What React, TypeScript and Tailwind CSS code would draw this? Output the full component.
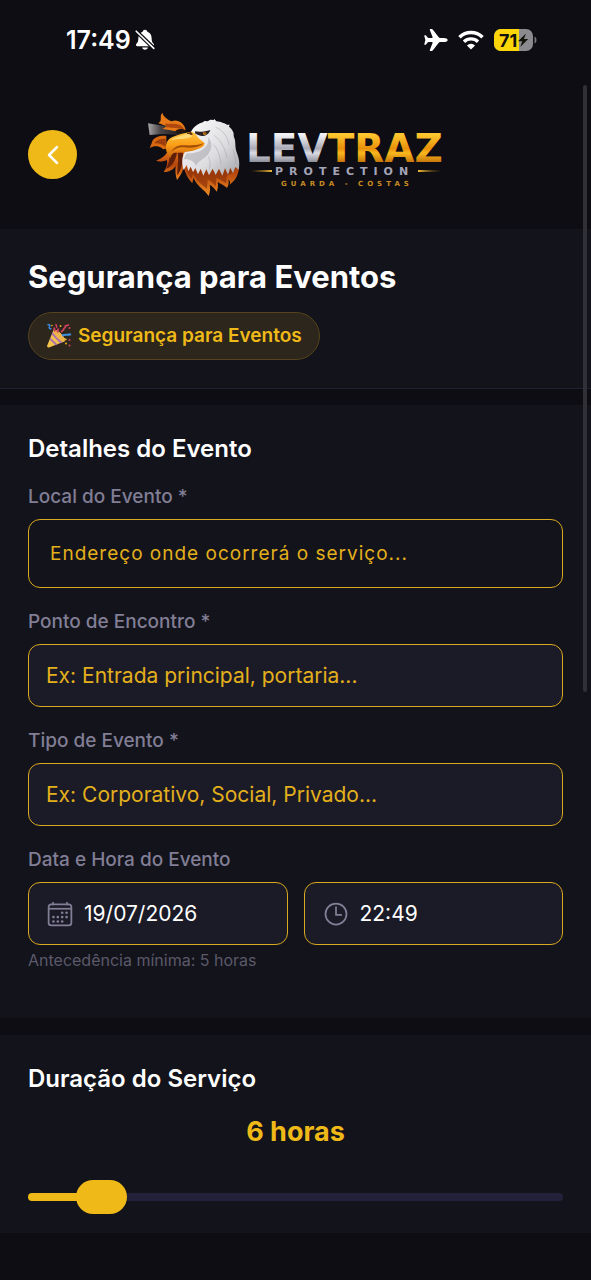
import { useState } from "react";
import { IoCalendarOutline, IoChevronBack, IoTimeOutline } from "react-icons/io5";

const inputClass =
  "h-[63px] w-full rounded-xl border border-[#d9a91f] bg-[#1b1a27] px-[17px] text-[21px] text-white placeholder-[#e3b01c] focus:outline-none";

function BellOff() {
  return (
    <svg className="h-[22px] w-[20px]" viewBox="0 0 20 22" fill="#fff">
      <path d="M10 .8c1.200 0 2.200.8 2.400 1.900 2.700.9 4.100 3.200 4.200 6.100.1 3.400.5 4.500 2 6 .9.900.4 2.500-.9 2.500H2.300c-1.300 0-1.800-1.600-.9-2.500 1.500-1.500 1.900-2.600 2-6 .1-2.900 1.500-5.200 4.200-6.100C7.800 1.600 8.800.8 10 .8Z" />
      <path d="M7.200 18.600h5.600c-.2 1.300-1.300 2.200-2.800 2.200s-2.600-.9-2.800-2.200Z" />
      <path d="M.6 1.600 19.600 20" stroke="#0e0d13" strokeWidth="4" />
      <path d="M1.200 2.200 18.800 19.400" stroke="#fff" strokeWidth="1.600" strokeLinecap="round" />
    </svg>
  );
}

function Airplane() {
  return (
    <svg className="h-[22px] w-[24px]" viewBox="0 0 68 64" fill="#fff">
      <path d="M68 32c0 4-5 6-11 6H46c-2 0-3 1-4 2L25 62c-1 1-2 2-4 2h-3c-2 0-2-1-2-3l8-20c0-2 0-3-3-3h-8c-2 0-3 1-4 2l-4 5c-1 1-2 1-3 1H1c-1 0-1-1-1-2l3-12L0 20c0-1 0-2 1-2h1c1 0 2 0 3 1l4 5c1 1 2 2 4 2h8c3 0 3-1 3-3L16 3c0-2 0-3 2-3h3c2 0 3 1 4 2l17 22c1 1 2 2 4 2h11c6 0 11 2 11 6Z" />
    </svg>
  );
}

function Wifi() {
  return (
    <svg className="h-[20px] w-[26px]" viewBox="0 0 26 20" fill="none" stroke="#fff">
      <path d="M1.500 7.200a16.500 16.500 0 0 1 23 0" strokeWidth="3.600" />
      <path d="M6 11.700a10.200 10.200 0 0 1 14 0" strokeWidth="3.400" />
      <path d="M13 19.500 8.900 15.400a5.900 5.900 0 0 1 8.200 0Z" fill="#fff" stroke="none" />
    </svg>
  );
}

function Battery() {
  return (
    <svg className="h-[22px] w-[43px]" viewBox="0 0 43 22">
      <defs>
        <clipPath id="cell">
          <rect x="0" y="0" width="39" height="22" rx="7" />
        </clipPath>
      </defs>
      <g clipPath="url(#cell)">
        <rect width="39" height="22" fill="#8b8b8f" />
        <rect width="25" height="22" fill="#fdd60a" />
      </g>
      <path d="M40.500 7.500c2.600.8 2.600 6.200 0 7Z" fill="#77777b" />
      <text x="5" y="17.500" fontSize="18" fontWeight="700" fill="#14130a" fontFamily="Inter, sans-serif">
        71
      </text>
      <path d="M32 4.500 24 12.300h4.300L26.200 18l8-7.900h-4.300Z" fill="#14130a" />
    </svg>
  );
}

function Eagle() {
  return (
    <svg className="h-[87px] w-[95px]" viewBox="22 35 285 261">
      <defs>
        <linearGradient id="flame" x1="0" y1="0" x2="0" y2="1">
          <stop offset="0" stopColor="#e8791a" />
          <stop offset=".5" stopColor="#b5460d" />
          <stop offset="1" stopColor="#ef8a22" />
        </linearGradient>
        <linearGradient id="beak" x1="0" y1="0" x2="0" y2="1">
          <stop offset="0" stopColor="#ffc63f" />
          <stop offset=".5" stopColor="#fb9d17" />
          <stop offset="1" stopColor="#c7620a" />
        </linearGradient>
        <linearGradient id="head" x1="0" y1="0" x2="1" y2="1">
          <stop offset="0" stopColor="#ffffff" />
          <stop offset=".6" stopColor="#dddde0" />
          <stop offset="1" stopColor="#a2a3a8" />
        </linearGradient>
        <linearGradient id="barrel" x1="0" y1="0" x2="1" y2="0">
          <stop offset="0" stopColor="#a9a6a6" />
          <stop offset=".35" stopColor="#4b4648" />
          <stop offset="1" stopColor="#171317" />
        </linearGradient>
      </defs>

      {/* neck feathers */}
      <path
        d="M126 150 134 210 C140 232 150 242 158 252 C160 244 160 240 162 236 C172 262 194 270 207 290 C212 276 212 266 210 256 C220 262 226 268 231 277 C235 268 236 258 234 248 C244 254 254 258 262 266 C268 258 268 248 266 240 C272 246 272 250 270 256 C286 244 298 228 298 200 L240 170Z"
        fill="url(#flame)"
      />
      <path
        d="M140 205C144 225 150 232 156 238L160 222C170 246 190 258 202 268L204 240C214 246 222 254 228 262L230 236C240 240 252 246 259 252L262 228C274 226 286 216 292 206L220 180Z"
        fill="#8c320a"
        opacity=".7"
      />

      {/* left wing flames */}
      <path
        d="M88 150C80 166 68 178 49 184 C60 188 70 187 82 182 C84 196 80 208 72 218 C86 218 100 212 108 200 C106 216 108 230 112 242 C120 232 128 220 132 206L130 150Z"
        fill="url(#flame)"
      />
      <path d="M92 160C90 176 88 190 80 208 98 200 108 184 112 160ZM114 160C118 186 112 206 113 228 122 214 130 200 130 160Z" fill="#5e1f09" />
      <path d="M80 110C62 108 42 114 38 126 36 132 34 138 30 146 44 138 56 140 66 146 72 152 76 150 80 146Z" fill="#d8680f" />
      <path d="M78 118C64 118 50 122 44 132 56 130 68 134 78 142Z" fill="#9c3d0b" />

      {/* gun barrel and crest */}
      <path d="M25 72 62 78 130 86 124 108 70 104 30 107Z" fill="url(#barrel)" />
      <path
        d="M62 66C66 56 60 50 68 40 72 54 84 60 96 66 112 58 134 70 138 92 L110 96C96 92 82 92 68 88 74 86 78 84 80 80 70 78 64 74 56 72Z"
        fill="#e67a18"
      />
      <path d="M76 72C90 76 104 70 118 76 128 80 132 86 134 92 112 84 96 88 80 84Z" fill="#b0480e" />
      <path d="M108 94C116 86 134 88 140 94L134 102H112Z" fill="#241513" />

      {/* head */}
      <path
        d="M154 98C160 84 176 72 190 69L194 65 204 66 212 61 222 62 224 59 230 66C246 68 254 72 262 76L270 76 268 82C278 90 284 100 282 110L286 122C288 136 286 148 292 162 300 182 300 198 297 211L287 203 280 222 272 205 265 226 256 207 248 229 238 208 228 227 219 208 208 228 200 210 191 229 183 208 175 225 167 206 160 219 153 202 146 216 141 197 132 212C126 194 126 172 136 158L190 138Z"
        fill="url(#head)"
      />
      <path
        d="M140 162C164 162 184 158 198 142 206 134 208 122 204 114 220 128 218 150 204 166 190 182 174 184 170 200 164 186 150 178 132 180Z"
        fill="#9899a0"
        opacity=".45"
      />
      <path
        d="M228 84C250 92 264 112 268 136M224 108C244 124 256 146 262 176M222 136C236 152 242 172 244 196M280 150C286 166 288 180 288 194M206 172C212 184 212 194 210 208"
        stroke="#96979e"
        strokeWidth="3"
        fill="none"
        opacity=".4"
      />

      {/* beak */}
      <path
        d="M84 164C74 146 78 122 98 113 114 106 132 102 150 98 158 96 166 100 170 108 176 118 186 124 194 130 196 138 190 142 182 146 166 154 148 158 130 157 112 154 98 158 92 176 88 172 86 168 84 164Z"
        fill="url(#beak)"
      />
      <path d="M92 124C104 112 126 108 148 103 158 102 160 110 152 114 136 122 116 116 92 124Z" fill="#ffe28a" opacity=".8" />
      <path d="M194 131C170 140 148 138 130 138 112 138 100 146 94 160 104 148 116 144 130 144 154 148 178 144 194 131Z" fill="#a14c07" />
      <path d="M142 100 154 98 160 105 154 108C151 104 147 103 142 104Z" fill="#6b350a" />

      {/* eye */}
      <path d="M166 96C180 99 196 97 212 92 208 104 198 110 186 110 178 109 172 106 166 102Z" fill="#2a2122" />
      <circle cx="195" cy="102" r="5" fill="#e18a16" />
      <circle cx="196" cy="101" r="2" fill="#0d0a0a" />
    </svg>
  );
}

function Wordmark() {
  return (
    <svg className="h-[87px] w-[198px]" viewBox="0 0 198 87" fontFamily="'DejaVu Sans', sans-serif" fontWeight="700">
      <defs>
        <linearGradient id="silver" x1="0" y1="0" x2="0" y2="1">
          <stop offset=".2" stopColor="#f2f2f5" />
          <stop offset=".5" stopColor="#a9aab6" />
          <stop offset=".6" stopColor="#dcdce4" />
          <stop offset=".85" stopColor="#787b88" />
        </linearGradient>
        <linearGradient id="gold" x1="0" y1="0" x2="0" y2="1">
          <stop offset=".2" stopColor="#ffc62e" />
          <stop offset=".5" stopColor="#e8900a" />
          <stop offset=".6" stopColor="#fbb81e" />
          <stop offset=".85" stopColor="#b86606" />
        </linearGradient>
        <linearGradient id="lineL" x1="0" x2="1">
          <stop offset="0" stopColor="#6d4a10" />
          <stop offset="1" stopColor="#f6bd35" />
        </linearGradient>
        <linearGradient id="lineR" x1="0" x2="1">
          <stop offset="0" stopColor="#f6bd35" />
          <stop offset="1" stopColor="#6d4a10" />
        </linearGradient>
      </defs>
      <text x="0" y="51" fontSize="39">
        <tspan fill="url(#silver)">LEV</tspan>
        <tspan fill="url(#gold)">TRAZ</tspan>
      </text>
      <path d="M4 60 26 59v2Z" fill="url(#lineL)" />
      <path d="M172 59 196 60 172 61Z" fill="url(#lineR)" />
      <text x="29" y="64" fontSize="11" fill="#a4a5b8" className="tracking-[6px]">
        PROTECTION
      </text>
      <text x="35" y="75" fontSize="7" fill="#c98c22" className="tracking-[4px]">
        GUARDA - COSTAS
      </text>
    </svg>
  );
}

function PartyPopper() {
  return (
    <svg className="h-[26px] w-[26px]" viewBox="0 0 26 26" fill="none">
      <path d="M7.500 7 1.200 22.600c-.5 1.300.5 2.300 1.800 1.800L19 18.200C17.500 12.500 13 8 7.500 7Z" fill="#f4c34b" />
      <path d="m5.600 11.600 8.600 8.600 2.400-1L6.500 9.300Zm-2 5 6 5.600 2-.8L4.400 14.800Z" fill="#a970b4" />
      <ellipse cx="13" cy="12.500" rx="2.800" ry="7.500" transform="rotate(-45 13 12.500)" fill="#f0b54a" />
      <path d="M9 8.500 8 4.600M11.500 9.500l.8-4" stroke="#c8405f" strokeWidth="2" />
      <path d="M1.500 2c2-1 3 .5 2 1.800s.5 2.600 2 1.600" stroke="#3a86d8" strokeWidth="1.600" />
      <path d="M9.500 1.200c1.700 1 .2 2.500 1.700 3.400" stroke="#d2445f" strokeWidth="1.600" />
      <path d="m15 9 2.600-2.200c-.9-1.700 2.400-1.600 1.700-3.200-.5-1.600 3.200-.3 3.400-2.200" stroke="#d2445f" strokeWidth="1.700" />
      <path d="M16 12.500c3-1.500 5-.2 9-1.300" stroke="#3f8fe0" strokeWidth="2" />
      <path d="m17.500 15.500 3 1.200" stroke="#f0b93a" strokeWidth="1.600" />
      <circle cx="23.500" cy="5" r="1" fill="#d2445f" />
      <circle cx="14.500" cy="3" r=".9" fill="#efb918" />
      <circle cx="6" cy="2.500" r=".8" fill="#efb918" />
      <circle cx="23.500" cy="17" r="1" fill="#d2445f" />
      <circle cx="20" cy="20.500" r="1" fill="#efb918" />
      <circle cx="23.500" cy="22.500" r="1" fill="#d2445f" />
    </svg>
  );
}

function StatusBar() {
  return (
    <div className="flex h-20 items-center justify-between pl-[66px] pr-[54px]">
      <div className="flex items-center gap-1">
        <span className="text-[25px] font-semibold leading-8 text-white">17:49</span>
        <BellOff />
      </div>
      <div className="flex items-center gap-2.5">
        <Airplane />
        <Wifi />
        <Battery />
      </div>
    </div>
  );
}

function Label({ htmlFor, text }: { htmlFor: string; text: string }) {
  return (
    <label htmlFor={htmlFor} className="mb-2.5 block text-[19px] font-medium leading-6 text-[#817e95]">
      {text}
    </label>
  );
}

export default function App() {
  const [hours, setHours] = useState(6);
  const min = 4;
  const max = 24;
  const percent = ((hours - min) / (max - min)) * 100;

  return (
    <div className="relative min-h-screen bg-[#0e0d13] font-['Inter',sans-serif]">
      <StatusBar />

      <header className="grid grid-cols-[49px_1fr_49px] items-center px-7 pt-[31px] pb-[31px]">
        <button
          type="button"
          aria-label="Voltar"
          className="flex h-[49px] w-[49px] items-center justify-center rounded-full bg-[#efb918] text-white"
        >
          <IoChevronBack className="h-7 w-7" />
        </button>
        <div className="flex justify-center gap-1">
          <Eagle />
          <Wordmark />
        </div>
      </header>

      <section className="border-b border-[#20202f] bg-[#13131b] px-7 pt-7 pb-7">
        <h1 className="text-[31px] font-bold leading-10 text-white">Segurança para Eventos</h1>
        <div className="mt-[15px] inline-flex h-12 items-center gap-1.5 rounded-full border border-[#55431b] bg-[#2d261c] px-[17px] align-top">
          <PartyPopper />
          <span className="text-[19px] font-semibold text-[#efb918]">Segurança para Eventos</span>
        </div>
      </section>

      <section className="mt-4 bg-[#13131b] px-7 pt-7 pb-12">
        <h2 className="mb-5 text-[24px] font-semibold leading-8 text-white">Detalhes do Evento</h2>
        <div className="flex flex-col gap-[22px]">
          <div>
            <Label htmlFor="local" text="Local do Evento *" />
            <input
              id="local"
              type="text"
              placeholder="Endereço onde ocorrerá o serviço..."
              className="block h-[69px] w-full rounded-xl border border-[#d9a91f] bg-transparent px-[21px] text-[19px] tracking-[1px] text-white placeholder-[#e3b01c] focus:outline-none"
            />
          </div>
          <div>
            <Label htmlFor="ponto" text="Ponto de Encontro *" />
            <input id="ponto" type="text" placeholder="Ex: Entrada principal, portaria..." className={inputClass} />
          </div>
          <div>
            <Label htmlFor="tipo" text="Tipo de Evento *" />
            <input id="tipo" type="text" placeholder="Ex: Corporativo, Social, Privado..." className={inputClass} />
          </div>
          <div>
            <Label htmlFor="data" text="Data e Hora do Evento" />
            <div className="grid grid-cols-2 gap-4">
              <div className="flex h-[63px] items-center gap-2.5 rounded-xl border border-[#d9a91f] bg-[#1b1a27] px-[17px]">
                <IoCalendarOutline className="h-7 w-7 shrink-0 text-[#817e95]" />
                <input
                  id="data"
                  type="text"
                  defaultValue="19/07/2026"
                  className="w-full min-w-0 bg-transparent text-[21px] text-white focus:outline-none"
                />
              </div>
              <div className="flex h-[63px] items-center gap-2.5 rounded-xl border border-[#d9a91f] bg-[#1b1a27] px-[17px]">
                <IoTimeOutline className="h-7 w-7 shrink-0 text-[#817e95]" />
                <input
                  type="text"
                  aria-label="Hora do Evento"
                  defaultValue="22:49"
                  className="w-full min-w-0 bg-transparent text-[21px] text-white focus:outline-none"
                />
              </div>
            </div>
            <p className="mt-[5px] text-[16px] leading-5 text-[#5b596a]">Antecedência mínima: 5 horas</p>
          </div>
        </div>
      </section>

      <section className="mt-[17px] bg-[#13131b] px-7 pt-7 pb-5">
        <h2 className="text-[24px] font-semibold leading-8 text-white">
          <label htmlFor="duracao">Duração do Serviço</label>
        </h2>
        <p className="mt-[21px] text-center text-[27px] font-bold leading-8 text-[#efb918]">{hours} horas</p>
        <input
          id="duracao"
          type="range"
          min={min}
          max={max}
          value={hours}
          onChange={(e) => setHours(Number(e.target.value))}
          className="mt-8 block h-[33px] w-full appearance-none bg-transparent [&::-webkit-slider-runnable-track]:h-2 [&::-webkit-slider-runnable-track]:rounded-full [&::-webkit-slider-runnable-track]:bg-[linear-gradient(to_right,#efb918_var(--fill),#232139_var(--fill))] [&::-webkit-slider-thumb]:-mt-[13px] [&::-webkit-slider-thumb]:h-[34px] [&::-webkit-slider-thumb]:w-[51px] [&::-webkit-slider-thumb]:appearance-none [&::-webkit-slider-thumb]:rounded-full [&::-webkit-slider-thumb]:bg-[#efb918]"
          style={{ "--fill": `${percent}%` } as React.CSSProperties}
        />
      </section>

      <div className="absolute top-[85px] right-1 h-[607px] w-1 rounded-full bg-[#313036]" />
    </div>
  );
}
